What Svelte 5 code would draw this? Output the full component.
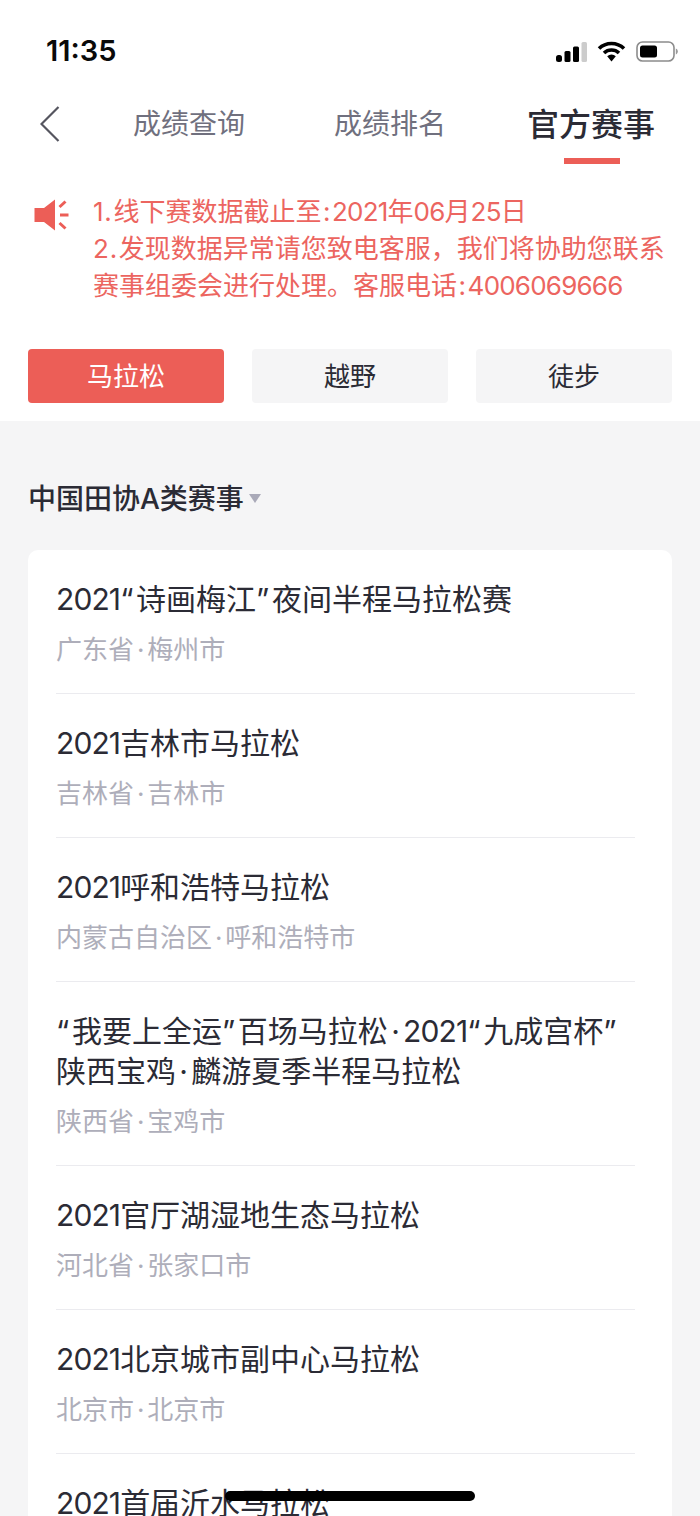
<script lang="ts">
  interface Race {
    title: string[];
    place: string;
  }

  const tabs = ['成绩查询', '成绩排名', '官方赛事'];
  const activeTab = '官方赛事';
  const kinds = ['马拉松', '越野', '徒步'];
  const activeKind = '马拉松';

  const notices = [
    '1.线下赛数据截止至:2021年06月25日',
    '2.发现数据异常请您致电客服，我们将协助您联系',
    '赛事组委会进行处理。客服电话:4006069666',
  ];

  const races: Race[] = [
    { title: ['2021“诗画梅江”夜间半程马拉松赛'], place: '广东省·梅州市' },
    { title: ['2021吉林市马拉松'], place: '吉林省·吉林市' },
    { title: ['2021呼和浩特马拉松'], place: '内蒙古自治区·呼和浩特市' },
    { title: ['“我要上全运”百场马拉松·2021“九成宫杯”', '陕西宝鸡·麟游夏季半程马拉松'], place: '陕西省·宝鸡市' },
    { title: ['2021官厅湖湿地生态马拉松'], place: '河北省·张家口市' },
    { title: ['2021北京城市副中心马拉松'], place: '北京市·北京市' },
    { title: ['2021首届沂水马拉松'], place: '山东省·临沂市' },
  ];

  // digits, punctuation and the middle dot need their own spacing next to CJK
  function runs(text: string) {
    return text
      .split(/([0-9]+|[.:]|[“”]|·)/)
      .filter(Boolean)
      .map((t) => ({
        t,
        cls: /^[0-9]/.test(t) ? 'num' : /[.:]/.test(t) ? 'sep' : /[“”]/.test(t) ? 'quote' : t === '·' ? 'dot' : '',
      }));
  }
</script>

{#snippet rich(text: string)}
  {#each runs(text) as r}{#if r.cls}<span class={r.cls}>{r.t}</span>{:else}{r.t}{/if}{/each}
{/snippet}

<div class="page">
  <header class="top">
    <div class="status">
      <span class="time">11:35</span>
      <div class="status-icons">
        <svg width="31" height="20" viewBox="0 0 31 20">
          <rect x="0" y="13" width="6" height="7" rx="2.500" fill="#000" />
          <rect x="8.500" y="9" width="6" height="11" rx="1.500" fill="#000" />
          <rect x="17" y="4.500" width="6" height="15.500" rx="1.500" fill="#000" />
          <rect x="25.500" y="0" width="5.500" height="20" rx="1.500" fill="#ccc" />
        </svg>
        <svg width="29" height="21" viewBox="0 0 28 21">
          <path d="M1.500 7.500a18 18 0 0 1 25 0" fill="none" stroke="#000" stroke-width="3.600" />
          <path d="M6.500 12a11 11 0 0 1 15 0" fill="none" stroke="#000" stroke-width="3.600" />
          <path d="M9.700 15.300a6 6 0 0 1 8.600 0L14 20.500z" fill="#000" />
        </svg>
        <svg width="42" height="21" viewBox="0 0 42 21">
          <rect x="1" y="1" width="37" height="19" rx="5.500" fill="none" stroke="#8c8c8c" stroke-width="1.600" />
          <rect x="4" y="4.500" width="17" height="12" rx="2.500" fill="#000" />
          <path d="M39.800 7.500c1.200.4 2 1.600 2 3s-.8 2.600-2 3z" fill="#999" />
        </svg>
      </div>
    </div>

    <nav class="nav">
      <svg class="back" width="20" height="36" viewBox="0 0 20 36">
        <path d="M18.500 1L1.500 18l17 17" fill="none" stroke="#55555f" stroke-width="2.200" />
      </svg>
      {#each tabs as tab (tab)}
        <div class="tab" class:active={tab === activeTab}>{tab}</div>
      {/each}
    </nav>

    <div class="notice">
      <svg class="horn" width="36" height="34" viewBox="0 0 36 34">
        <path d="M0.500 10h9.500L21 1.500v31L10 24H0.500z" fill="#ec5e57" />
        <path d="M25.500 9l6-5.500M26 17h8.500M25.500 25l6 5.500" fill="none" stroke="#ec5e57" stroke-width="3" />
      </svg>
      <div class="notice-text">
        {#each notices as line}
          <div>{@render rich(line)}</div>
        {/each}
      </div>
    </div>

    <div class="kinds">
      {#each kinds as kind (kind)}
        <button class="kind" class:on={kind === activeKind}>{kind}</button>
      {/each}
    </div>
  </header>

  <main class="body">
    <div class="section">
      <span>中国田协A类赛事</span>
      <i class="caret"></i>
    </div>

    <div class="card">
      {#each races as race (race.place)}
        <div class="race">
          <div class="race-title">
            {#each race.title as line}
              <div>{@render rich(line)}</div>
            {/each}
          </div>
          <div class="race-place">{@render rich(race.place)}</div>
        </div>
      {/each}
    </div>
  </main>

  <div class="home"></div>
</div>

<style>
  :global(body) {
    margin: 0;
    background: #f5f5f6;
  }

  .page {
    position: relative;
    width: 700px;
    height: 1516px;
    overflow: hidden;
    background: #f5f5f6;
    font-family: Inter, 'Noto Sans CJK SC', sans-serif;
  }

  .top {
    background: #fff;
    height: 421px;
    box-sizing: border-box;
  }

  .status {
    height: 84px;
    box-sizing: border-box;
    padding: 34px 22px 0 46px;
    display: flex;
    justify-content: space-between;
    align-items: flex-start;
  }

  .time {
    font-size: 29px;
    line-height: 34px;
    font-weight: 600;
    color: #0a0a0a;
  }

  .status-icons {
    display: flex;
    align-items: center;
    gap: 10px;
    padding-top: 7px;
  }

  .nav {
    display: flex;
    align-items: flex-start;
    height: 80px;
    padding-left: 40px;
  }

  .back {
    margin-top: 22px;
    margin-right: 73px;
  }

  .tab {
    font-family: 'Noto Sans CJK SC', sans-serif;
    font-size: 28px;
    line-height: 40px;
    margin-top: 18px;
    margin-right: 89px;
    color: #70707e;
    white-space: nowrap;
  }

  .tab.active {
    position: relative;
    margin-right: 0;
    margin-left: -8px;
    font-size: 32px;
    font-weight: 500;
    color: #2b2b35;
  }

  .tab.active::after {
    content: '';
    position: absolute;
    left: 37px;
    top: 56px;
    width: 56px;
    height: 6px;
    background: #ec5e57;
  }

  .notice {
    display: flex;
    align-items: flex-start;
    padding: 29px 20px 0 34px;
    height: 185px;
    box-sizing: border-box;
  }

  .horn {
    margin-top: 5px;
    margin-right: 23px;
    flex: none;
  }

  .notice-text {
    font-size: 26px;
    line-height: 37px;
    color: #ec6560;
    white-space: nowrap;
  }

  .kinds {
    display: flex;
    gap: 28px;
    padding: 0 28px;
  }

  .kind {
    flex: 1;
    height: 54px;
    border: none;
    padding: 0 0 4px;
    border-radius: 4px;
    background: #f5f5f6;
    color: #2b2b35;
    font-family: 'Noto Sans CJK SC', sans-serif;
    font-size: 26px;
  }

  .kind.on {
    background: #ec5e57;
    color: #fff;
  }

  .body {
    padding: 0 28px;
  }

  .section {
    display: flex;
    align-items: center;
    height: 129px;
    padding-top: 23px;
    box-sizing: border-box;
    font-size: 28px;
    font-weight: 500;
    color: #2b2b35;
  }

  .caret {
    width: 0;
    height: 0;
    margin-left: 5px;
    margin-top: 2px;
    border-left: 6.500px solid transparent;
    border-right: 6.500px solid transparent;
    border-top: 9px solid #a9a9b8;
  }

  .card {
    background: #fff;
    border-radius: 10px 10px 0 0;
    padding: 0 37px 0 28px;
  }

  .race {
    padding: 29px 0 23px;
    border-bottom: 1px solid #ebebef;
  }

  .race-title {
    font-size: 30px;
    line-height: 40px;
    color: #2b2b35;
    white-space: nowrap;
  }

  .race-place {
    margin-top: 11px;
    font-size: 26px;
    line-height: 40px;
    color: #aeaeba;
    white-space: nowrap;
  }

  .num {
    letter-spacing: -0.03em;
  }

  .sep {
    margin: 0 0.06em;
  }

  .quote {
    letter-spacing: 0.09em;
  }

  .dot {
    margin: 0 0.11em;
  }

  .home {
    position: absolute;
    left: 225px;
    top: 1491px;
    width: 250px;
    height: 10px;
    border-radius: 5px;
    background: #000;
  }
</style>
